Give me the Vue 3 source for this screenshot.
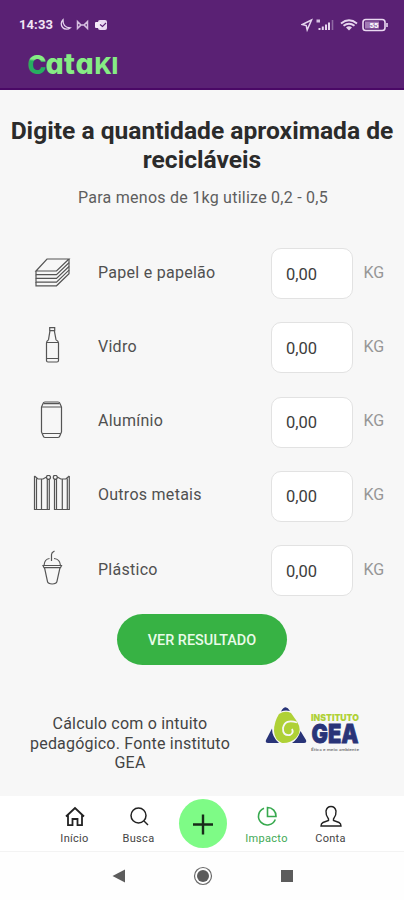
<template>
  <div class="screen">
    <header class="header">
      <div class="status">
        <span class="time">14:33</span>
        <svg class="st-left" width="50" height="14" viewBox="0 0 50 14" fill="none">
          <path d="M5 1.800A5.400 5.400 0 1 0 12.300 9.800Q4.500 9.500 5 1.800z" stroke="#e6d5ee" stroke-width="1.300" />
          <path d="M19.500 3.500v7l3.500-3.500zM29.500 3.500v7L26 7zM21.500 7h6" stroke="#d5bfe0" stroke-width="1.500" />
          <rect x="40" y="2" width="9" height="10" rx="2" fill="#ead9f1" />
          <rect x="37" y="4" width="6" height="6" rx="1" fill="#f5eaf9" />
          <path d="M42 6.500l2.500 2L48 5" stroke="#5a2174" stroke-width="1.100" />
        </svg>
        <svg class="st-right" width="88" height="16" viewBox="0 0 88 16" fill="none">
          <path d="M10.500 3L1.200 7.500l4 1 1 4.300z" stroke="#e6d5ee" stroke-width="1.500" />
          <path d="M15.500 2.500h3.500v3h-3.500z" fill="#d5bfe0" />
          <path d="M18.500 13v-2M21.800 13V9.500M25 13V7.500M28 13V5.500" stroke="#e6d5ee" stroke-width="2" />
          <path d="M31.500 13V3" stroke="#8f69a3" stroke-width="1.600" />
          <path d="M40 6.500Q48 0 56 6.500M42.500 8.800Q48 4.500 53.500 8.800" stroke="#e6d5ee" stroke-width="1.900" />
          <path d="M45 10.500Q48 8 51 10.500L48 13.500z" fill="#e6d5ee" />
          <rect x="62" y="2.500" width="22" height="11" rx="2.800" stroke="#ead9f1" stroke-width="1.600" />
          <rect x="64" y="4.500" width="14" height="7" fill="#a17ab4" />
          <path d="M86 6v4" stroke="#e6d5ee" stroke-width="1.600" />
          <text x="73" y="11" text-anchor="middle" font-size="8" font-weight="700" fill="#fff">55</text>
        </svg>
      </div>
      <svg class="logo" width="100" height="38" viewBox="0 0 100 38">
        <defs>
          <linearGradient id="c" x1="0.650" y1="0" x2="0.350" y2="1">
            <stop offset="0.500" stop-color="#86ec84" />
            <stop offset="0.560" stop-color="#27ae60" />
          </linearGradient>
        </defs>
        <text class="logo-text" y="28"><tspan x="-0.500" class="logo-c">C</tspan><tspan x="17.500 36 47.500" class="logo-low">ata</tspan><tspan x="66.500 83.500" class="logo-cap">KI</tspan></text>
      </svg>
    </header>

    <main class="content">
      <h1>Digite a quantidade aproximada de recicláveis</h1>
      <p class="hint">Para menos de 1kg utilize 0,2 - 0,5</p>

      <div class="list">
        <div v-for="item in items" :key="item.name" class="row">
          <svg class="icon" width="40" height="40" viewBox="0 0 40 40">
            <path v-for="d in item.paths" :key="d" :d="d" />
          </svg>
          <label class="name" :for="item.id">{{ item.name }}</label>
          <input :id="item.id" v-model="item.amount" type="text" inputmode="decimal">
          <span class="unit">KG</span>
        </div>
      </div>

      <button class="result">VER RESULTADO</button>

      <div class="source">
        <p>Cálculo com o intuito pedagógico. Fonte instituto GEA</p>
        <svg width="98" height="48" viewBox="0 0 98 48">
          <path d="M16 5.500Q20.500-2.500 25 5Q20 4 16 5.500z" fill="#293478" />
          <path d="M7 22.500L1 34Q0 37 3 37h11Q7 31 7 22.500z" fill="#293478" />
          <path d="M35.500 25L41 34Q42 37 39 37H27Q33 33 35.500 25z" fill="#293478" />
          <path d="M14 8Q20 4 26 7L32 15.500Q38 25 31 32 25 37.500 17 37 9.500 34 9 25 9 16 14 8z" fill="#afd136" />
          <path d="M32 16.500Q20 12.500 18 22 17.500 30 25 29 29 27 27 23" fill="none" stroke="#f7f7f7" stroke-width="1.800" />
          <text x="46" y="14.500" class="inst" textLength="48" lengthAdjust="spacingAndGlyphs">INSTITUTO</text>
          <text x="46.500" y="37" class="gea" textLength="47" lengthAdjust="spacingAndGlyphs">GEA</text>
          <text x="46" y="45" class="slogan" textLength="48" lengthAdjust="spacingAndGlyphs">Ética e meio ambiente</text>
        </svg>
      </div>
    </main>

    <nav class="tabs">
      <a class="tab">
        <svg width="24" height="24" viewBox="0 0 24 24"><path d="M3 12.500l9-8.500 9 8.500M5 11v10.200h4.500v-6.200h5v6.200H19V11" stroke-width="1.800" /></svg>
        <span>Início</span>
      </a>
      <a class="tab">
        <svg width="24" height="24" viewBox="0 0 24 24"><circle cx="11.500" cy="11.500" r="7.500" /><path d="M17 17l4 4" /></svg>
        <span>Busca</span>
      </a>
      <a class="plus">
        <svg width="24" height="24" viewBox="0 0 24 24"><path d="M2 12.500h20M12 2.500v20" /></svg>
      </a>
      <a class="tab active">
        <svg width="24" height="24" viewBox="0 0 24 24"><path d="M9 4.200A8.700 8.700 0 1 0 20.300 15.500M12.500 3.500v9H21A8.500 8.500 0 0 0 12.500 3.500z" stroke-width="1.600" /></svg>
        <span>Impacto</span>
      </a>
      <a class="tab">
        <svg width="24" height="24" viewBox="0 0 24 24"><path d="M9.500 15Q6.500 11 7 7 8 2.500 12 2.500T17 7Q17.500 11 14.500 15V16.500L20 18.500Q22 19.500 22 22H2Q2 19.500 4 18.500L9.500 16.500z" stroke-width="1.400" /></svg>
        <span>Conta</span>
      </a>
    </nav>

    <footer class="system">
      <svg width="20" height="20" viewBox="0 0 20 20"><path d="M3.500 10l12.500-6.500v13z" fill="#5c5c5c" /></svg>
      <svg width="20" height="20" viewBox="0 0 20 20"><circle cx="10" cy="10" r="8.500" fill="none" stroke="#6a6a6a" stroke-width="1.200" /><circle cx="10" cy="10" r="6" fill="#5c5c5c" /></svg>
      <svg width="20" height="20" viewBox="0 0 20 20"><path d="M4 4h12v12H4z" fill="#5c5c5c" /></svg>
    </footer>
  </div>
</template>

<script setup>
import { ref } from 'vue'

const items = ref([
  {
    id: 'papel',
    name: 'Papel e papelão',
    amount: '0,00',
    paths: [
      'M15 6H37L24.500 18H4z',
      'M4 18v3.700h20.500L37 9.700V6',
      'M4 21.700v3.700h20.500L37 13.400V9.700',
      'M4 25.400v3.700h20.500L37 17.100V13.400',
      'M4 29.100v3.700h20.500L37 20.800V17.100'
    ]
  },
  {
    id: 'vidro',
    name: 'Vidro',
    amount: '0,00',
    paths: [
      'M17.700 0.700h5v3h-5zM18 3.700l-1.500 9Q14.500 14 14.500 16V33.500Q14.500 35 16 35h9Q26.500 35 26.500 33.500V16Q26.500 14 24 12.700L22.300 3.700',
      'M14.500 15.500h12M14.500 31.500h12'
    ]
  },
  {
    id: 'aluminio',
    name: 'Alumínio',
    amount: '0,00',
    paths: [
      'M13 1h13q1.500 0 2 1.500l1.500 3.500V31l-1.500 3.500Q27.500 36.500 26 36.500H13Q11.500 36.500 11 34.500L9.500 31V6L11 2.500Q11.500 1 13 1z',
      'M11.500 2.700h16M10 6h19M10.500 32.500h18'
    ]
  },
  {
    id: 'metais',
    name: 'Outros metais',
    amount: '0,00',
    paths: [
      'M2.500 1v33.500h14.800V4M2.500 1l3.500 3h5L14.500 2M4.500 3.500v31M9.500 4v30.500M15.300 4.500v30M14.500 2.300a2 2 0 1 0 4 0 2 2 0 1 0-4 0',
      'M37.300 1v33.500H22.500V4M37.300 1l-3.500 3h-5L25.300 2M35.300 3.500v31M30.300 4v30.500M24.500 4.500v30M21.300 2.300a2 2 0 1 0 4 0 2 2 0 1 0-4 0'
    ]
  },
  {
    id: 'plastico',
    name: 'Plástico',
    amount: '0,00',
    paths: [
      'M19.500 11V4.500q0-2 3-3.500',
      'M12 15.500Q12.500 9 17.500 8.500M22 8.500Q28 9 28.500 15.500M11 15.500h18.500l-1 2.200h-16.500z',
      'M12.500 17.700l3 14Q16 34 20.200 34t4.700-2.300L28 17.700'
    ]
  }
])
</script>

<style>
  body{
    margin: 0;
    background: #f7f7f7;
  }
</style>

<style scoped>
  .screen{
    width: 404px;
    height: 900px;
    display: flex;
    flex-direction: column;
    overflow: hidden;
    background: #f7f7f7;
    color: #505050;
    font-family: Roboto, "Liberation Sans", sans-serif;
  }
  .header{
    height: 90px;
    flex: none;
    box-sizing: border-box;
    padding-top: 16px;
    background: #5a2174;
    border-bottom: 2px solid #4a0866;
  }
  .status{
    display: flex;
    align-items: center;
    height: 17px;
    padding: 0 15px 0 19px;
  }
  .time{
    width: 39px;
    font-size: 13px;
    font-weight: 700;
    letter-spacing: 0.1px;
    color: #f1e5f5;
  }
  .st-right{
    margin-left: auto;
  }
  .logo{
    display: block;
    margin: 13px 0 0 28px;
  }
  .logo-text{
    font-family: Inter, sans-serif;
    font-feature-settings: "cv11" 1;
    font-weight: 800;
    fill: #86ec84;
  }
  .logo-c{
    font-size: 25.500px;
    fill: url(#c);
  }
  .logo-low{
    font-size: 28.500px;
  }
  .logo-cap{
    font-size: 23.500px;
  }
  .content{
    flex: 1;
    display: flex;
    flex-direction: column;
    align-items: center;
  }
  h1{
    margin: 26px 0 0;
    font-size: 24.600px;
    line-height: 29px;
    font-weight: 700;
    text-align: center;
    color: #2b2b2b;
  }
  .hint{
    margin: 13px 0 0 2px;
    font-size: 16px;
    line-height: 21px;
    letter-spacing: 0.25px;
    color: #5e5e5e;
  }
  .list{
    width: 100%;
    margin-top: 40px;
    display: flex;
    flex-direction: column;
    gap: 23.300px;
  }
  .row{
    height: 51px;
    display: flex;
    align-items: center;
  }
  .icon{
    margin: 0 26px 2px 32px;
    fill: none;
    stroke: #555;
    stroke-width: 1.2;
  }
  .name{
    width: 173px;
    padding-bottom: 3px;
    font-size: 16px;
    letter-spacing: 0.27px;
  }
  input{
    width: 82px;
    height: 51px;
    box-sizing: border-box;
    padding: 1px 14px 0;
    border: 1px solid #e2e2e2;
    border-radius: 10px;
    background: #fff;
    font: 16.500px Roboto, sans-serif;
    color: #3d3d3d;
  }
  .unit{
    margin-left: 10.500px;
    padding-bottom: 3px;
    font-size: 16px;
    color: #969696;
  }
  .result{
    width: 170px;
    height: 51px;
    margin-top: 18px;
    padding: 2px 0 0;
    flex: none;
    border: none;
    border-radius: 26px;
    background: #37b244;
    font: 500 14.400px Roboto, sans-serif;
    color: #e9fbe9;
  }
  .source{
    width: 100%;
    display: flex;
    margin-top: 41px;
  }
  .source p{
    width: 204px;
    margin: 8px 33px 0 28px;
    font-size: 16px;
    line-height: 19.500px;
    letter-spacing: 0.2px;
    text-align: center;
    color: #444;
  }
  .source svg{
    overflow: visible;
  }
  .inst{
    font: 900 9.500px Inter, sans-serif;
    fill: #afd136;
  }
  .gea{
    font: 900 26px Inter, sans-serif;
    fill: #293478;
    stroke: #293478;
    stroke-width: 0.8;
  }
  .slogan{
    font: 700 4.500px Lato, sans-serif;
    fill: #777;
  }
  .tabs{
    height: 56px;
    flex: none;
    display: flex;
    justify-content: center;
    align-items: center;
    padding-left: 1px;
    box-sizing: border-box;
    background: #fff;
    border-bottom: 1px solid #f3f3f3;
  }
  .tab{
    width: 64px;
    display: flex;
    flex-direction: column;
    align-items: center;
    gap: 4px;
    padding-top: 1px;
    font-size: 11px;
    line-height: 13px;
    letter-spacing: 0.3px;
    color: #444;
  }
  .tab svg, .plus svg{
    fill: none;
    stroke: #222;
    stroke-width: 1.5;
  }
  .active{
    color: #3fa956;
  }
  .tab.active svg{
    stroke: #37a94e;
  }
  .plus{
    width: 48px;
    height: 49px;
    margin: 0 8px;
    display: flex;
    align-items: center;
    justify-content: center;
    border-radius: 50%;
    background: #7efb86;
  }
  .plus svg{
    stroke: #182b19;
    stroke-width: 2.4;
  }
  .system{
    height: 48px;
    flex: none;
    display: flex;
    justify-content: center;
    align-items: center;
    gap: 64px;
    padding-left: 1px;
    box-sizing: border-box;
    background: #fefefe;
  }
</style>
